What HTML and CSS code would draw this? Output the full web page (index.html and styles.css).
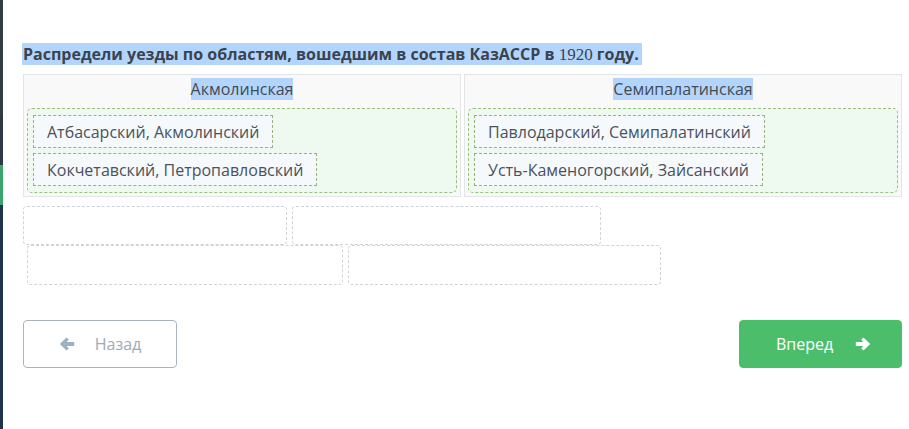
FILE: index.html
```html
<!DOCTYPE html>
<html lang="ru">
<head>
<meta charset="utf-8">
<title>Задание</title>
<link rel="stylesheet" href="styles.css">
</head>
<body>
<div class="page">
  <div class="strip">
    <div class="strip-top"></div>
    <div class="strip-mid"></div>
    <div class="strip-green"></div>
    <div class="strip-bottom"></div>
  </div>
  <main class="main">
    <h2 class="title"><span class="sel">Распредели уезды по областям, вошедшим в состав КазАССР в <span class="num">1920</span> году.</span></h2>
    <div class="table">
      <div class="cell">
        <div class="cell-head"><span class="sel">Акмолинская</span></div>
        <div class="zone">
          <div class="item">Атбасарский, Акмолинский</div>
          <div class="item">Кокчетавский, Петропавловский</div>
        </div>
      </div>
      <div class="cell">
        <div class="cell-head"><span class="sel">Семипалатинская</span></div>
        <div class="zone">
          <div class="item">Павлодарский, Семипалатинский</div>
          <div class="item">Усть-Каменогорский, Зайсанский</div>
        </div>
      </div>
    </div>
    <div class="slots">
      <div class="slot-row">
        <div class="slot s1"></div>
        <div class="slot s2"></div>
      </div>
      <div class="slot-row row2">
        <div class="slot s3"></div>
        <div class="slot s4"></div>
      </div>
    </div>
    <div class="nav">
      <button class="btn back">
        <svg class="ico" viewBox="0 0 16 14" width="16" height="14"><path d="M7.5 0.5 L0.8 7 L7.5 13.5 L9.8 11.2 L7.6 9 H15.2 V5 H7.6 L9.8 2.8 Z" fill="#9bb0c0"/></svg>
        <span>Назад</span>
      </button>
      <button class="btn next">
        <span>Вперед</span>
        <svg class="ico" viewBox="0 0 16 14" width="16" height="14"><path d="M8.5 0.5 L15.2 7 L8.5 13.5 L6.2 11.2 L8.4 9 H0.8 V5 H8.4 L6.2 2.8 Z" fill="#ffffff"/></svg>
      </button>
    </div>
  </main>
</div>
</body>
</html>
```
FILE: styles.css
```css
html, body {
  margin: 0;
  padding: 0;
  background: #ffffff;
}
body {
  font-family: "Open Sans", "Noto Sans", sans-serif;
  color: #3b4450;
}
.page {
  display: flex;
  width: 909px;
  height: 429px;
  overflow: hidden;
}
.strip {
  width: 3px;
  display: flex;
  flex-direction: column;
  flex: none;
}
.strip-top { height: 115px; background: #323c46; }
.strip-mid { height: 50px; background: #2c3a47; }
.strip-green { height: 40px; background: #3aa56a; }
.strip-bottom { flex: 1; background: #1f3349; }

.main {
  flex: 1;
  padding: 0 7px 0 20px;
  display: flex;
  flex-direction: column;
}
.title {
  margin: 44px 0 0 0;
  font-size: 16px;
  font-weight: 700;
  line-height: 21px;
  height: 21px;
  white-space: nowrap;
  color: #3a4350;
}
.sel {
  background: #b4d5fb;
}
.title .sel {
  padding: 0 3px 0 1px;
  margin-left: -1px;
}
.num {
  font-family: "Liberation Serif", "DejaVu Serif", serif;
  font-weight: 400;
  font-size: 17px;
}
.table {
  margin-top: 9px;
  display: grid;
  grid-template-columns: 438px 438px;
  column-gap: 3px;
}
.cell {
  border: 1px solid #e2e5e8;
  background: #f9f9f9;
  height: 121px;
  box-sizing: content-box;
  display: flex;
  flex-direction: column;
  padding: 0 3px;
}
.cell-head {
  height: 33px;
  text-align: center;
  font-size: 16px;
  line-height: 20px;
  padding-top: 4px;
  box-sizing: border-box;
  color: #434b55;
}
.zone {
  height: 85px;
  box-sizing: border-box;
  background: #eefaf0;
  border: 1px dashed #93c47a;
  border-radius: 5px;
  padding: 6px 5px;
  display: flex;
  flex-direction: column;
  align-items: flex-start;
  gap: 5px;
}
.item {
  height: 33px;
  box-sizing: border-box;
  border: 1px dashed #97b27a;
  background: #f5f9fc;
  padding: 1px 13px 0;
  font-size: 16px;
  line-height: 31px;
  color: #4a525b;
  white-space: nowrap;
}
.slots {
  margin-top: 9px;
  display: flex;
  flex-direction: column;
}
.slot-row {
  display: flex;
  gap: 5px;
}
.row2 {
  padding-left: 4px;
}
.slot {
  height: 39px;
  box-sizing: border-box;
  border: 1px dashed #cfd4d8;
  border-radius: 4px;
  background: #ffffff;
}
.row2 .slot { height: 40px; }
.s1 { width: 264px; }
.s2 { width: 309px; }
.s3 { width: 316px; }
.s4 { width: 313px; }

.nav {
  margin-top: 35px;
  display: flex;
  justify-content: space-between;
}
.btn {
  height: 48px;
  box-sizing: border-box;
  border-radius: 4px;
  font-family: "Open Sans", "Noto Sans", sans-serif;
  font-size: 16px;
  display: flex;
  align-items: center;
  justify-content: center;
  gap: 20px;
  padding: 0;
  cursor: pointer;
}
.back {
  width: 154px;
  background: #ffffff;
  border: 1px solid #aab4bc;
  color: #9aabb9;
}
.next {
  width: 163px;
  background: #4cbe6b;
  border: 1px solid #4cbe6b;
  color: #ffffff;
  gap: 22px;
  padding-left: 6px;
}
.ico {
  display: block;
}
```
